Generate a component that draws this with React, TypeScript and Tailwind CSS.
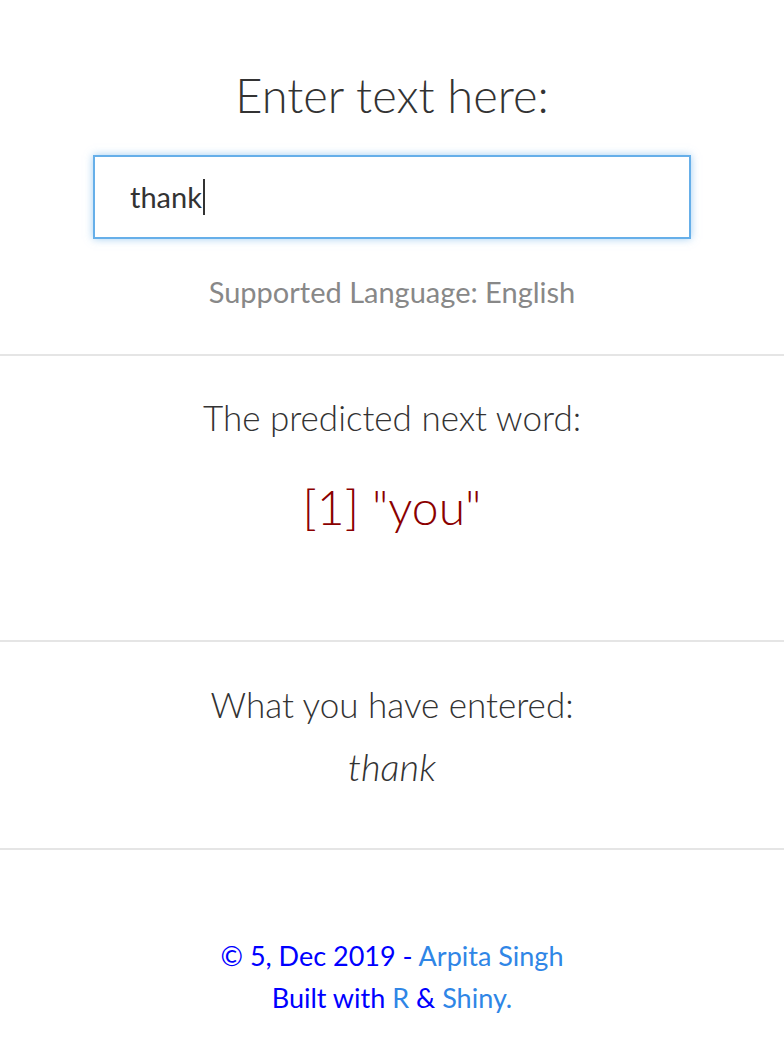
export default function App() {
  return (
    <div className="w-[784px] min-h-[1056px] bg-white text-[#333]" style={{ fontFamily: "Lato, 'Open Sans', sans-serif" }}>
      <div className="flex flex-col items-center pt-[65px]">
        <h1 className="text-[47px] leading-[60px] font-light">Enter text here:</h1>
        <div className="mt-[30px] w-[598px] h-[84px] border-2 border-[#66afe9] shadow-[0_0_8px_rgba(102,175,233,0.6)] flex items-center pl-[35px]">
          <span className="text-[29px] text-[#333]">thank</span>
          <span className="w-[2px] h-[36px] bg-[#333] ml-[1px]"></span>
        </div>
        <p className="mt-[33px] text-[29px] leading-[40px] text-[#888]">Supported Language: English</p>
      </div>
      <div className="mt-[42px] h-[2px] bg-[#e5e5e5]"></div>
      <div className="flex flex-col items-center h-[284px]">
        <p className="mt-[37px] text-[35px] font-light leading-[48px]">The predicted next word:</p>
        <p className="mt-[36px] text-[48px] font-light leading-[60px] text-[#8b0000]">[1] "you"</p>
      </div>
      <div className="h-[2px] bg-[#e5e5e5]"></div>
      <div className="flex flex-col items-center h-[206px]">
        <p className="mt-[38px] text-[35px] font-light leading-[48px]">What you have entered:</p>
        <p className="mt-[14px] text-[38px] font-light italic leading-[48px]">thank</p>
      </div>
      <div className="h-[2px] bg-[#e5e5e5]"></div>
      <div className="flex flex-col items-center pt-[85px] text-[27px] leading-[42px]">
        <p className="text-[#0000ff]">© 5, Dec 2019 - <span className="text-[#2f86e6]">Arpita Singh</span></p>
        <p className="text-[#0000ff]">Built with <span className="text-[#2f86e6]">R</span> &amp; <span className="text-[#2f86e6]">Shiny.</span></p>
      </div>
    </div>
  );
}
